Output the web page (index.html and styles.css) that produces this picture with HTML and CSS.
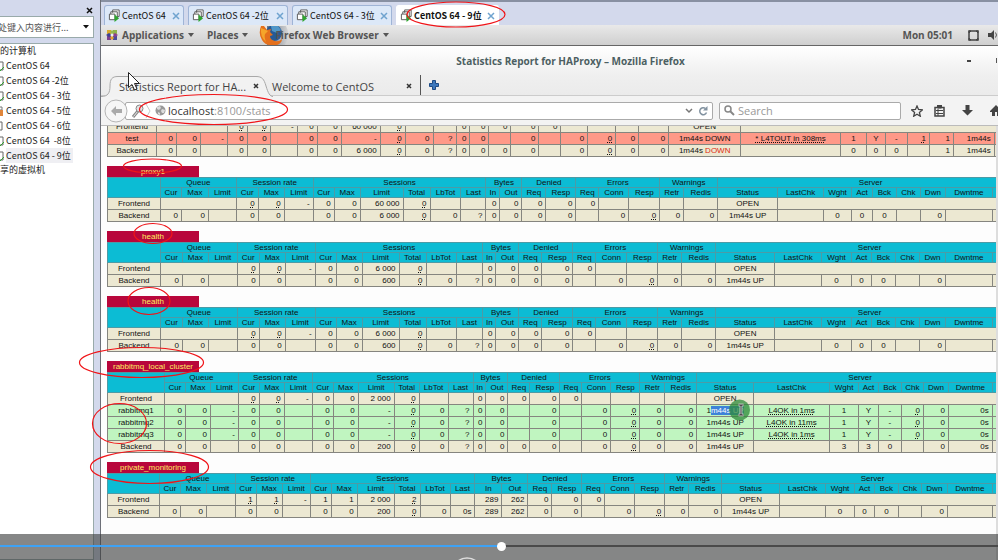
FILE: index.html
```html
<!DOCTYPE html>
<html lang="zh-CN">
<head>
<meta charset="utf-8">
<title>Statistics Report for HAProxy</title>
<link rel="stylesheet" href="styles.css">
</head>
<body>
<svg class="defs" aria-hidden="true">
  <symbol id="vm" viewBox="0 0 14 14">
    <path d="M5 4V1h7v7h-2M3 6V3h7v7H8" fill="#fff" stroke="#555"/>
    <path d="M1.500 5.500h6v6h-6z" fill="#fff" stroke="#555"/>
    <path d="M7 6l5 4-5 4z" fill="#2fa52f"/>
  </symbol>
  <symbol id="node" viewBox="0 0 6 12"><path d="M0 2h3v8H0" fill="#fff" stroke="#666"/><path d="M0 11l4-4" stroke="#2fa52f"/></symbol>
  <symbol id="cross" viewBox="0 0 8 8"><path d="M1 1l6 6M7 1L1 7" stroke="#6fa3cf" stroke-width="1.500"/></symbol>
</svg>
<div class="shell">
  <aside class="side">
    <div class="side-head"><button class="plain" aria-label="关闭"><svg width="7" height="7"><path d="M1 1l5 5M6 1l-5 5" stroke="#111" stroke-width="1.500"/></svg></button></div>
    <div class="side-search"><input type="text" aria-label="搜索" value="在此处键入内容进行..."><svg width="6" height="4"><path d="M0 0h6L3 3.500z" fill="#111"/></svg></div>
    <nav class="tree">
      <div class="root">我的计算机</div>
      <a href="#"><svg><use href="#node"/></svg><span>CentOS 64</span></a>
      <a href="#"><svg><use href="#node"/></svg><span>CentOS 64 -2位</span></a>
      <a href="#"><svg><use href="#node"/></svg><span>CentOS 64 - 3位</span></a>
      <a href="#"><svg viewBox="0 0 6 12"><path d="M0 2h2v3H0" fill="#fff" stroke="#777"/><path d="M0 5h3v6H0z" fill="#e0853a"/></svg><span>CentOS 64 - 5位</span></a>
      <a href="#"><svg viewBox="0 0 6 12"><path d="M0 2h2v8H0" fill="#fff" stroke="#666"/></svg><span>CentOS 64 - 6位</span></a>
      <a href="#"><svg><use href="#node"/></svg><span>CentOS 64&nbsp; -8位</span></a>
      <a href="#" class="on"><svg><use href="#node"/></svg><span>CentOS 64 - 9位</span></a>
      <div class="root">共享的虚拟机</div>
    </nav>
  </aside>
  <main class="main">
    <div class="vmtabs">
      <div class="vmtab"><svg class="vi"><use href="#vm"/></svg><span>CentOS 64</span><button class="plain x" aria-label="关闭"><svg><use href="#cross"/></svg></button></div>
      <div class="vmtab wide"><svg class="vi"><use href="#vm"/></svg><span>CentOS 64 -2位</span><button class="plain x" aria-label="关闭"><svg><use href="#cross"/></svg></button></div>
      <div class="vmtab wide"><svg class="vi"><use href="#vm"/></svg><span>CentOS 64 - 3位</span><button class="plain x" aria-label="关闭"><svg><use href="#cross"/></svg></button></div>
      <div class="vmtab wide on"><svg class="vi"><use href="#vm"/></svg><span>CentOS 64 - 9位</span><button class="plain x" aria-label="关闭"><svg><use href="#cross"/></svg></button></div>
    </div>
    <div class="gnome">
      <svg class="apps" width="12" height="12"><path d="M1 1h4v4H1z" fill="#d8a92c"/><path d="M7 1h4v4H7z" fill="#8fb34a"/><path d="M1 7h4v4H1z" fill="#7c3f8e"/><path d="M7 7h4v4H7z" fill="#4a4a9c"/><path d="M6 1l2 2-2 3-2-3z" fill="#97b850"/><path d="M6 6l2 3-2 2-2-2z" fill="#e0a030"/><path d="M0 6l3-2 3 2-3 2z" fill="#3b3f94"/><path d="M6 6l3-2 3 2-3 2z" fill="#8c3f8c"/><circle cx="6" cy="6" r="1.500" fill="#eee"/></svg>
      <button class="plain menu">Applications<i></i></button>
      <button class="plain menu places">Places<i></i></button>
      <svg class="fox" width="31" height="19" viewBox="0 0 31 19">
        <defs><linearGradient id="fade"><stop offset="0" stop-color="#6d7888"/><stop offset="1" stop-color="#d5d5d5"/></linearGradient></defs>
        <path d="M8 0h19q5 9-1 19H8z" fill="url(#fade)"/>
        <circle cx="15" cy="7" r="8" fill="#265a96"/><path d="M12 0h7l3 4-4 3-5-2z" fill="#4f96c8"/>
        <path d="M2 0Q-1 8 3 14q3 5 8 5h7q5-2 5-6-3 3-7 2-5-1-5-5l3-1-3-3 1-3-4 1-3-4z" fill="#e4701c"/>
        <path d="M2 2q-1 9 5 14-2-5-1-8l3-3z" fill="#f5a52a"/>
      </svg>
      <button class="plain menu app">Firefox Web Browser<i></i></button>
      <span class="clock">Mon 05:01</span>
      <svg width="11" height="11"><path d="M1 1h9v9H1z" fill="none" stroke="#444" stroke-width="1.500"/><path d="M1 10V8l2 2zM10 10V8l-2 2zM1 1v2l2-2zM10 1v2L8 1z" fill="#444" stroke="#444"/></svg>
      <svg class="vol" width="10" height="10"><path d="M0 3h3l3-3v10L3 7H0z" fill="#444"/><path d="M7.500 2.500q2 2.500 0 5" stroke="#555" fill="none"/></svg>
    </div>
    <section class="ff">
      <header class="ff-title"><h1>Statistics Report for HAProxy – Mozilla Firefox</h1><button class="plain min" aria-label="Minimize"></button><i class="max"></i></header>
      <div class="ff-tabs">
        <svg class="tabshape" width="172" height="22" viewBox="0 0 172 22"><path d="M0 21.500C7 21.500 9 18 9 11 9 4 11 1.500 17 1.500H155C161 1.500 163 4 165 11 167 18 169 21.500 172 21.500" fill="#f2f2f2" stroke="#a9a9a9"/></svg>
        <div class="fftab first"><span>Statistics Report for HA...</span><button class="plain" aria-label="Close tab"><svg width="6" height="6"><path d="M1 1l4 4M5 1l-4 4" stroke="#333" stroke-width="1.500"/></svg></button></div>
        <div class="fftab second"><span>Welcome to CentOS</span><button class="plain" aria-label="Close tab"><svg width="6" height="6"><path d="M1 1l4 4M5 1l-4 4" stroke="#333" stroke-width="1.500"/></svg></button></div>
        <button class="plain plus" aria-label="New tab"><svg width="10" height="10"><path d="M3.500.5h3v3h3v3h-3v3h-3v-3h-3v-3h3z" fill="#3d78bd" stroke="#1e4b85"/></svg></button>
      </div>
      <div class="nav">
        <button class="plain back" aria-label="Back"><svg width="24" height="24"><circle cx="12" cy="12" r="11" fill="#f6f6f6" stroke="#b5b5b5"/><path d="M7 12l5-5v3h6v4h-6v3z" fill="#aaa"/></svg></button>
        <div class="url">
          <svg width="22" height="16"><path d="M2 14L7 8" stroke="#888" stroke-width="3"/><path d="M2.500 13.500L7 8" stroke="#e8e8e8"/><circle cx="8.500" cy="5.500" r="3.500" fill="#e4e4e4" stroke="#888"/><path d="M15 1l4 7-4 7" stroke="#c9c9c9" fill="none"/></svg>
          <svg class="globe" width="11" height="11"><circle cx="5.500" cy="5.500" r="5" fill="#999"/><path d="M2 2l3-1 1 2-2 2-2-1zM7 4l3 1-1 3-2 0-1-2zM3 7l2 1v2L3 9z" fill="#ddd"/></svg>
          <div class="addr" role="textbox" aria-label="Address">localhost<span>:8100/stats</span></div>
          <svg width="8" height="6"><path d="M1 1l3 3 3-3" stroke="#777" stroke-width="1.500" fill="none"/></svg>
          <svg width="10" height="10"><path d="M8.500 6.500A3.500 3.500 0 1 1 7.500 2.500" stroke="#8292a0" stroke-width="1.500" fill="none"/><path d="M9.500 0v4.500H5z" fill="#8292a0"/></svg>
        </div>
        <label class="search"><svg width="11" height="11"><circle cx="4" cy="4" r="3" fill="none" stroke="#888" stroke-width="1.500"/><path d="M6 6l4 4" stroke="#888" stroke-width="2"/></svg><input type="text" placeholder="Search" aria-label="Search"></label>
        <div class="tools">
          <svg width="12" height="12"><path d="M6 1l1.500 3.500 3.800.4-2.900 2.500.9 3.800L6 9.200l-3.300 2 .9-3.800L.7 4.900l3.800-.4z" fill="none" stroke="#444" stroke-width="1.300"/></svg>
          <svg width="11" height="12"><path d="M1 2.500h9v8.500H1z" fill="none" stroke="#444" stroke-width="1.500"/><path d="M3.500 0h4v3h-4zM2 5.500h7M2 8.500h7M4 4v7" stroke="#444" fill="#444"/></svg>
          <svg width="11" height="11"><path d="M3.500 0h4v5H11L5.500 10.500 0 5h3.500z" fill="#444"/></svg>
          <svg width="10" height="11"><path d="M0 6l6-6 6 6v1h-2v4H7V7H5v4H2V7H0z" fill="#444"/></svg>
        </div>
      </div>
      <div class="page" id="page"></div>
    </section>
  </main>
</div>
<svg class="marks" aria-hidden="true">
  <g fill="none" stroke="#f01418" stroke-width="1.200">
    <ellipse cx="456" cy="14.500" rx="49" ry="12.500"/><ellipse cx="213.500" cy="109.500" rx="74" ry="15"/>
    <ellipse cx="152.500" cy="166" rx="29" ry="7"/><ellipse cx="153" cy="233.500" rx="19" ry="10"/>
    <ellipse cx="149" cy="301" rx="21" ry="13.500"/><ellipse cx="141.500" cy="362.500" rx="62" ry="15"/>
    <ellipse cx="119.500" cy="423.500" rx="27" ry="20"/><ellipse cx="149.500" cy="467" rx="59" ry="16.500"/>
  </g>
  <circle cx="739.500" cy="410" r="10.500" fill="#2f8a3a" opacity=".75"/>
  <path d="M738.500 405h2l.5.500.5-.5h2M738.500 415h2l.5-.5.500.5h2M741 405v10" stroke="#fff" stroke-width="2.500" fill="none"/>
  <path d="M738.500 405h5M738.500 415h5M741 405v10" stroke="#111" fill="none"/>
  <path d="M128.500 72.500v15l3.500-3 2.500 5.500 2.500-1-2.500-5.500h5z" fill="#fff" stroke="#222"/>
</svg>
<div class="player">
  <label><input type="range" min="0" max="998" value="502" aria-label="播放进度"></label>
  <svg width="30" height="4"><circle cx="15" cy="16" r="15" fill="none" stroke="#ddd" stroke-width="1.500"/></svg>
</div>
<script src="stats.js"></script>
</body>
</html>
```
FILE: styles.css
```css
* { box-sizing: border-box; }
body { margin: 0; height: 100vh; overflow: hidden; position: relative; background: #fff; font-family: "Open Sans", "Noto Sans CJK SC", sans-serif; font-size: 11px; color: #333; }
svg { display: block; flex: none; }
.defs { position: absolute; width: 0; height: 0; }
.plain { border: 0; background: none; padding: 0; margin: 0; font: inherit; color: inherit; line-height: inherit; }
.shell { display: grid; grid-template-columns: 100px minmax(0, 1fr); height: 100%; }

.side { background: #d3d9ec; padding-right: 6px; display: flex; flex-direction: column; overflow: hidden; font-family: "Noto Sans CJK SC", sans-serif; }
.side-head { height: 16px; display: flex; justify-content: flex-end; padding: 5px 0 0; }
.side-head svg { margin-right: 1px; }
.side-search { height: 22px; display: flex; align-items: center; background: #fff; border: 1px solid #9aa; border-left: 0; padding-right: 4px; }
.side-search input { flex: 1; min-width: 0; border: 0; padding: 0; margin-left: -20px; font: 9px "Noto Sans CJK SC", sans-serif; color: #555; background: none; }
.tree { flex: 1; margin-top: 5px; background: #fff; border: 1px solid #9aa; border-left: 0; font-size: 9px; line-height: 15px; color: #222; white-space: nowrap; }
.tree .root { margin-left: -9px; line-height: 14px; }
.tree a { display: flex; align-items: center; color: inherit; text-decoration: none; }
.tree a svg { width: 6px; height: 12px; }
.tree a.on span { background: #efeff3; padding-right: 2px; }

.main { display: flex; flex-direction: column; min-width: 0; border-left: 1px solid #6d7078; overflow: hidden; }
.vmtabs { height: 25px; display: flex; align-items: flex-end; gap: 4px; padding-left: 3px; background: #d3d9ec; border-top: 2px solid #8890a2; font-family: "Noto Sans CJK SC", sans-serif; font-size: 9px; line-height: 14px; }
.vmtab { width: 80px; height: 20px; display: flex; align-items: center; gap: 1px; padding: 0 3px 0 3px; background: #dce8f8; border: 1px solid #9fb4d6; border-bottom: 0; border-radius: 3px 3px 0 0; white-space: nowrap; color: #111; }
.vmtab.wide { width: 100px; }
.vmtab.on { background: #fff; font-weight: 700; border-color: #fff; width: 103px; }
.vi { width: 13px; height: 13px; }
.vmtab .x { margin-left: auto; }
.vmtab .x svg { width: 8px; height: 8px; }

.gnome { height: 21px; flex: none; display: flex; align-items: center; padding: 0 0 0 5px; background: linear-gradient(#e9e9e9, #cfcfcf); border-bottom: 1px solid #666; font-weight: 700; font-size: 10px; color: #555; overflow: hidden; }
.menu { display: flex; align-items: center; gap: 4px; white-space: nowrap; margin-left: 4px; }
.menu i { border: 3px solid transparent; border-top: 4px solid #555; border-bottom: 0; }
.menu.places { margin-left: 13px; }
.fox { margin-left: 11px; }
.menu.app { margin-left: -15px; }
.clock { margin-left: auto; margin-right: 15px; }
.vol { margin-left: 9px; }

.ff { flex: 1; display: flex; flex-direction: column; min-height: 0; background: #fff; }
.ff-title { height: 29px; display: flex; align-items: center; background: linear-gradient(#fff, #efefef); }
.ff-title h1 { flex: 1; margin: 0 0 0 73px; text-align: center; font-size: 10px; font-weight: 700; color: #4c5f62; }
.min { width: 4px; height: 2px; background: #444; margin-right: 25px; }
.max { width: 1px; height: 5px; background: #555; margin-right: 1px; }
.ff-tabs { height: 21px; display: flex; align-items: center; position: relative; background: linear-gradient(#efefef, #ebebeb); border-bottom: 1px solid #ccc; }
.tabshape { position: absolute; left: 0; top: 0; }
.fftab { position: relative; display: flex; align-items: center; justify-content: space-between; height: 20px; padding-top: 2px; white-space: nowrap; color: #444; }
.fftab.first { width: 157px; margin-left: 18px; padding-right: 17px; }
.fftab.second { width: 149px; margin-left: -4px; padding-right: 8px; border-right: 1px solid #555; }
.plus { margin-left: 8px; }
.nav { height: 30px; flex: none; display: flex; align-items: center; background: #f3f3f3; border-bottom: 1px solid #bbb; padding-left: 3px; overflow: hidden; }
.back { position: relative; z-index: 1; }
.url { flex: 1; height: 18px; margin-left: -3px; display: flex; align-items: center; gap: 5px; background: #fff; border: 1px solid #aaa; border-radius: 2px; padding: 0 4px 0 5px; }
.globe { margin-left: -3px; }
.addr { flex: 1; color: #333; margin-left: -3px; }
.addr span { color: #999; }
.search { width: 182px; height: 18px; margin-left: 6px; display: flex; align-items: center; gap: 3px; background: #fff; border: 1px solid #aaa; border-radius: 2px; padding: 0 4px; }
.search input { flex: 1; min-width: 0; border: 0; padding: 0; background: none; font: 11px "Open Sans", sans-serif; }
.search input::placeholder { color: #999; }
.tools { display: flex; align-items: center; gap: 11px; margin: 0 -2px 0 10px; }
.tools svg:nth-child(3) { margin: 0 6px; }

.page { flex: 1; overflow: hidden; padding-left: 6px; background: #fdfdfd; border-right: 2px solid #ddd; }
.stats { table-layout: fixed; border-collapse: collapse; margin-bottom: 9px; font: 8px/11px "Liberation Sans", sans-serif; color: #111; white-space: nowrap; }
.stats.cut { margin-top: -6px; }
.stats caption { text-align: left; }
.stats caption a { display: block; width: 92px; height: 11px; background: #b8063b; color: #ffec60; text-align: center; text-decoration: none; }
.stats th, .stats td { border: 1px solid #85857f; padding: 0; overflow: hidden; }
.stats thead th { background: #0cbcd4; border-color: #4c9ba6; font-weight: 400; line-height: 9px; height: 10px; }
.stats tbody th { font-weight: 400; text-align: center; }
.stats tbody tr { background: #ece8d2; }
.stats tbody td { text-align: right; padding-right: 3px; height: 12px; }
.stats tbody td.mid { text-align: center; padding: 0; }
.stats tbody tr.down { background: #ff9988; }
.stats tbody tr.up { background: #c0f5c0; }
.stats u { text-decoration: underline dotted; text-underline-offset: 1px; }
.stats b { font-weight: 400; color: #e02a10; }
.stats mark { background: #3d82d8; color: #fff; }

.marks { position: absolute; inset: 0; width: 100%; height: 100%; pointer-events: none; }
.player { position: absolute; left: 0; right: 0; bottom: 0; height: 26px; background: rgba(60, 62, 61, .62); overflow: hidden; }
.player label { display: block; height: 23px; }
.player input { appearance: none; display: block; width: 100%; height: 24px; margin: 0; background: linear-gradient(90deg, #3ea2f5 50%, #4a4a4a 50%) center / 100% 2px no-repeat; }
.player input::-webkit-slider-thumb { appearance: none; width: 9px; height: 9px; border-radius: 50%; background: #fff; }
.player svg { margin-left: 452px; }
```
FILE: stats.js
```js
// Column edges are in table units; widths become percentages of the table.
// The last column runs past the right side of the page and is clipped there.
const pageSpan = 889;
const groups = [["Queue", 3], ["Session rate", 3], ["Sessions", 6], ["Bytes", 2], ["Denied", 2], ["Errors", 3], ["Warnings", 2]];
const heads = "Cur,Max,Limit,Cur,Max,Limit,Cur,Max,Limit,Total,LbTot,Last,In,Out,Req,Resp,Req,Conn,Resp,Retr,Redis,Status,LastChk,Wght,Act,Bck,Chk,Dwn,Dwntme".split(",");
const health = {
  name: "health",
  edges: [107,160,182,208,237,259,285,315,336,362,399,426,456,483,496,519,542,573,596,627,658,682,716,775,822,852,872,896,920,946,993,1024],
  rows: ["|Frontend,*3,0_,0_,-,0,0,6 000,0_,,,0,0,0,0,0,,,,,OPEN,*8",
         "|Backend,0,0,,0,0,,0,0,600,0_,0,?,0,0,0,0,,0,0_,0,0,1m44s UP,,0,0,0,,0,,"]
};
const tables = [
  { name: "", edges: [107,156,176,200,227,247,270,297,317,341,380,405,433,456,470,489,511,539,561,588,616,639,669,741,841,867,886,908,930,954,995,1024],
    rows: ["|Frontend,*3,0_,0_,-,0,0,60 000,0_,,,0,0,0,0,0,,,,,OPEN,*8",
           "down|test,0,0,-,0,0,,0,0,-,0_,0,?,0,0,,0,,0,0_,0,0,1m44s DOWN,* L4TOUT in 308ms_,1,Y,-,1_,1,1m44s,",
           "|Backend,0,0,,0,0,,0,0,6 000,0_,0,?,0,0,0,0,,0,0_,0,0,1m44s <b>DOWN</b>,,0,0,0,,1,1m44s,"] },
  { name: "proxy1", edges: [107,160,181,208,236,258,284,313,334,360,403,430,461,486,500,522,546,576,599,629,660,684,718,778,824,852,873,897,921,946,993,1024],
    rows: ["|Frontend,*3,0_,0_,-,0,0,60 000,0_,,,0,0,0,0,0,,,,,OPEN,*8",
           "|Backend,0,0,,0,0,,0,0,6 000,0_,0,?,0,0,0,0,,0,0_,0,0,1m44s UP,,0,0,0,,0,,"] },
  health,
  health,
  { name: "rabbitmq_local_cluster", edges: [107,164,185,210,238,259,284,312,333,358,394,419,448,473,486,508,530,560,582,611,640,665,697,754,830,859,879,902,924,949,993,1024],
    rows: ["|Frontend,*3,0_,0_,-,0,0,2 000,0_,,,0,0,0,0,0,,,,,OPEN,*8",
           "up|rabbitmq1,0,0,-,0,0,,0,0,-,0_,0,?,0,0,,0,,0,0_,0,0,1<mark>m44s UP</mark>,L4OK in 1ms_,1,Y,-,0_,0,0s,",
           "up|rabbitmq2,0,0,-,0,0,,0,0,-,0_,0,?,0,0,,0,,0,0_,0,0,1m44s UP,L4OK in 11ms_,1,Y,-,0_,0,0s,",
           "up|rabbitmq3,0,0,-,0,0,,0,0,-,0_,0,?,0,0,,0,,0,0_,0,0,1m44s UP,L4OK in 1ms_,1,Y,-,0_,0,0s,",
           "|Backend,0,0,,0,0,,0,0,200,0_,0,?,0,0,0,0,,0,0_,0,0,1m44s UP,,3,3,0,,0,0s,"] },
  { name: "private_monitoring", edges: [107,159,180,206,235,256,282,310,331,357,394,420,450,475,502,528,552,582,605,635,665,689,722,780,826,855,875,899,922,948,993,1024],
    rows: ["|Frontend,*3,1_,1_,-,1,1,2 000,2_,,,289,262,0,0,0,,,,,OPEN,*8",
           "|Backend,0,0,,0,0,,0,0,200,0_,0,0s,289,262,0,0,,0,0_,0,0,1m44s UP,,0,0,0,,0,,"] }
];

function bodyRow(row) {
  const [kind, cells] = row.split("|");
  let col = 0;
  const html = cells.split(",").map((text) => {
    const span = /^\*\d/.test(text) && text.length === 2 ? Number(text.slice(1)) : 1;
    const at = col;
    col += span;
    if (at === 0) return `<th scope="row">${text}</th>`;
    if (span > 1) return `<td colspan="${span}"></td>`;
    const value = text.endsWith("_") ? `<u>${text.slice(0, -1)}</u>` : text;
    return `<td${at >= 22 && at <= 26 ? ' class="mid"' : ""}>${value}</td>`;
  }).join("");
  return `<tr class="${kind}">${html}</tr>`;
}

document.getElementById("page").innerHTML = tables.map(({ name, edges, rows }) => {
  const total = edges[edges.length - 1] - edges[0];
  const cols = edges.slice(1).map((e, i) => `<col style="width:${((e - edges[i]) / total * 100).toFixed(3)}%">`).join("");
  const thead = name ? `<thead><tr><th rowspan="2"></th>${groups.map(([g, n]) => `<th colspan="${n}">${g}</th>`).join("")}<th colspan="9">Server</th></tr>
    <tr>${heads.map((h) => `<th>${h}</th>`).join("")}<th></th></tr></thead>` : "";
  const caption = name ? `<caption><a href="#${name}">${name}</a></caption>` : "";
  return `<table class="stats${name ? "" : " cut"}" style="width:${(total / pageSpan * 100).toFixed(2)}%">${caption}<colgroup>${cols}</colgroup>${thead}<tbody>${rows.map(bodyRow).join("")}</tbody></table>`;
}).join("");
```
